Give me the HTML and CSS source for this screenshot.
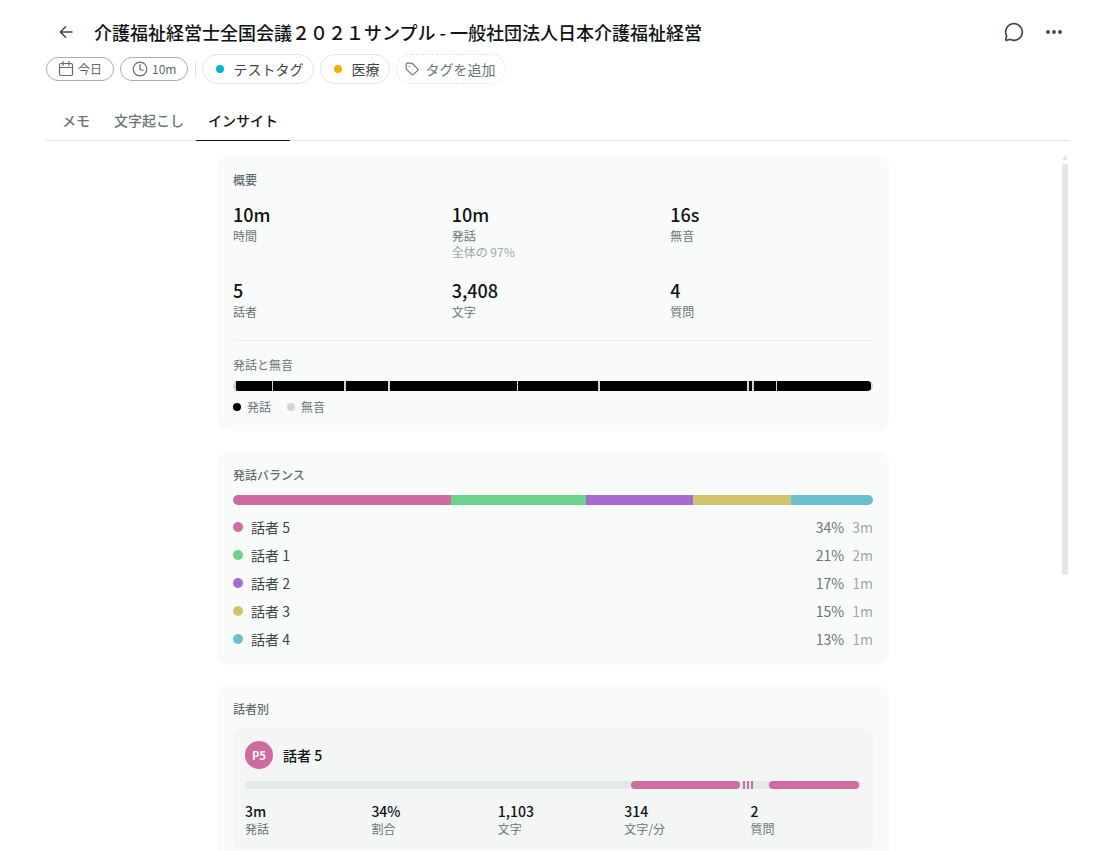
FILE: index.html
```html
<!DOCTYPE html>
<html lang="ja">
<head>
<meta charset="UTF-8">
<meta name="viewport" content="width=device-width,initial-scale=1.0">
<title>インサイト</title>
<link rel="stylesheet" href="styles.css">
</head>
<body>
	<header class="header">
		<button class="icon-btn back" aria-label="戻る">
			<svg width="18" height="18" viewBox="0 0 24 24"><path d="M20 12H4.5M11.5 5l-7 7 7 7"/></svg>
		</button>
		<h1 class="title">介護福祉経営士全国会議２０２１サンプル - 一般社団法人日本介護福祉経営</h1>
		<button class="icon-btn" aria-label="チャット">
			<svg width="20" height="20" viewBox="0 0 24 24"><path d="M2.992 16.342a2 2 0 0 1 .094 1.167l-1.065 3.29a1 1 0 0 0 1.236 1.168l3.413-.998a2 2 0 0 1 1.099.092 10 10 0 1 0-4.777-4.719"/></svg>
		</button>
		<button class="icon-btn" aria-label="メニュー">
			<svg class="fill" width="20" height="20" viewBox="0 0 20 20"><circle cx="4" cy="10" r="1.9"/><circle cx="10" cy="10" r="1.9"/><circle cx="16" cy="10" r="1.9"/></svg>
		</button>
	</header>
	<div class="tags">
		<button class="pill">
			<svg width="16" height="16" viewBox="0 0 16 16"><rect x="1.5" y="2.5" width="13" height="12" rx="1.5"/><path d="M1.5 6.5h13M5 .5v4M11 .5v4"/></svg>今日
		</button>
		<button class="pill">
			<svg width="16" height="16" viewBox="0 0 16 16"><circle cx="8" cy="8" r="6.8"/><path d="M8 3.5v5l3 1"/></svg>10m
		</button>
		<span class="divider"></span>
		<button class="tag"><i class="tag-dot cyan"></i>テストタグ</button>
		<button class="tag"><i class="tag-dot amber"></i>医療</button>
		<button class="tag add">
			<svg width="14" height="14" viewBox="0 0 24 24"><path d="M12.586 2.586A2 2 0 0 0 11.172 2H4a2 2 0 0 0-2 2v7.172a2 2 0 0 0 .586 1.414l8.704 8.704a2.426 2.426 0 0 0 3.42 0l6.58-6.58a2.426 2.426 0 0 0 0-3.42z"/><circle class="hole" cx="7.5" cy="7.5" r="1"/></svg>タグを追加
		</button>
	</div>
	<nav class="tabs">
		<a href="#" class="tab">メモ</a>
		<a href="#" class="tab">文字起こし</a>
		<a href="#" class="tab active">インサイト</a>
	</nav>
	<div class="body">
		<main class="scroll">
			<section class="card">
				<h2 class="card-title">概要</h2>
				<div class="stats">
					<div><p class="num">10m</p><p class="label">時間</p></div>
					<div><p class="num">10m</p><p class="label">発話</p><p class="label sub">全体の 97%</p></div>
					<div><p class="num">16s</p><p class="label">無音</p></div>
					<div><p class="num">5</p><p class="label">話者</p></div>
					<div><p class="num">3,408</p><p class="label">文字</p></div>
					<div><p class="num">4</p><p class="label">質問</p></div>
				</div>
				<div class="silence">
					<p class="label">発話と無音</p>
					<!-- flex-grow = 区間の長さ -->
					<div class="bar speech">
						<i class="quiet" style="flex-grow:3"></i><i style="flex-grow:36"></i>
						<i class="quiet" style="flex-grow:1"></i><i style="flex-grow:71"></i>
						<i class="quiet" style="flex-grow:2"></i><i style="flex-grow:42"></i>
						<i class="quiet" style="flex-grow:2"></i><i style="flex-grow:127"></i>
						<i class="quiet" style="flex-grow:1"></i><i style="flex-grow:80"></i>
						<i class="quiet" style="flex-grow:2"></i><i style="flex-grow:147"></i>
						<i class="quiet" style="flex-grow:2"></i><i style="flex-grow:3"></i>
						<i class="quiet" style="flex-grow:2"></i><i style="flex-grow:22"></i>
						<i class="quiet" style="flex-grow:1"></i><i class="last" style="flex-grow:94"></i>
						<i class="quiet" style="flex-grow:2"></i>
					</div>
					<div class="legend">
						<span class="label key">発話</span>
						<span class="label key off">無音</span>
					</div>
				</div>
			</section>

			<section class="card">
				<h2 class="card-title">発話バランス</h2>
				<div class="bar">
					<i class="pink" style="flex-grow:218"></i>
					<i class="green" style="flex-grow:135"></i>
					<i class="purple" style="flex-grow:107"></i>
					<i class="yellow" style="flex-grow:98"></i>
					<i class="blue" style="flex-grow:82"></i>
				</div>
				<ul class="speakers">
					<li><i class="dot pink"></i><span class="name">話者 5</span><span>34%</span><span class="time">3m</span></li>
					<li><i class="dot green"></i><span class="name">話者 1</span><span>21%</span><span class="time">2m</span></li>
					<li><i class="dot purple"></i><span class="name">話者 2</span><span>17%</span><span class="time">1m</span></li>
					<li><i class="dot yellow"></i><span class="name">話者 3</span><span>15%</span><span class="time">1m</span></li>
					<li><i class="dot blue"></i><span class="name">話者 4</span><span>13%</span><span class="time">1m</span></li>
				</ul>
			</section>

			<section class="card">
				<h2 class="card-title">話者別</h2>
				<div class="person">
					<div class="person-head">
						<span class="avatar pink">P5</span>
						<h3 class="person-name">話者 5</h3>
					</div>
					<div class="bar timeline">
						<i style="flex-grow:386"></i><i class="pink long" style="flex-grow:109"></i>
						<i style="flex-grow:3"></i><i class="pink" style="flex-grow:2"></i>
						<i style="flex-grow:2"></i><i class="pink" style="flex-grow:2"></i>
						<i style="flex-grow:2"></i><i class="pink" style="flex-grow:2"></i>
						<i style="flex-grow:16"></i><i class="pink long" style="flex-grow:90"></i>
						<i style="flex-grow:2"></i>
					</div>
					<div class="person-stats">
						<div><p class="val">3m</p><p class="label">発話</p></div>
						<div><p class="val">34%</p><p class="label">割合</p></div>
						<div><p class="val">1,103</p><p class="label">文字</p></div>
						<div><p class="val">314</p><p class="label">文字/分</p></div>
						<div><p class="val">2</p><p class="label">質問</p></div>
					</div>
				</div>
			</section>
		</main>
		<div class="rail">
			<i class="rail-up"></i>
			<i class="rail-thumb"></i>
		</div>
	</div>
</body>
</html>
```
FILE: styles.css
```css
*{margin:0;padding:0;box-sizing:border-box;}
html,body{height:100%;}
body{
	display: flex;
	flex-direction: column;
	padding: 12px 50px 0 46px;
	font-family: "Noto Sans CJK JP", sans-serif;
	font-size: 14px;
	line-height: 20px;
	color: #3c4649;
	background: #fff;
	overflow: hidden;
}
button{font: inherit;color: inherit;background: none;border: none;cursor: pointer;}
a{color: inherit;text-decoration: none;}
ul{list-style: none;}
i{display: block;}
svg{flex: none;fill: none;stroke: currentColor;stroke-width: 2;stroke-linecap: round;stroke-linejoin: round;}

.header{display: flex;align-items: center;gap: 8px;height: 40px;}
.icon-btn{display: flex;align-items: center;justify-content: center;width: 32px;height: 32px;}
.icon-btn.back{width: 40px;}
.icon-btn .fill{fill: currentColor;stroke: none;}
.title{flex: 1;min-width: 0;overflow: hidden;white-space: nowrap;text-overflow: ellipsis;font-size: 18px;line-height: 28px;font-weight: 500;color: #101415;}

.tags{display: flex;align-items: center;gap: 6px;margin-top: 2px;}
.pill{
	display: flex;
	align-items: center;
	gap: 4px;
	height: 24px;
	padding: 0 11px;
	border: 1px solid #a9adae;
	border-radius: 12px;
	font-size: 12px;
	color: #626b6d;
}
.pill svg{stroke-width: 1.2;}
.divider{width: 1px;height: 16px;margin-left: 1px;background: #e0e3e4;}
.tag{
	display: flex;
	align-items: center;
	gap: 6px;
	height: 30px;
	padding: 0 10px;
	border: 1px solid #e1e5e6;
	border-radius: 15px;
}
.tag-dot{width: 8px;height: 8px;margin: 0 3px;border-radius: 50%;}
.cyan{background: #06b6d4;}
.amber{background: #eab308;}
.tag.add{padding-left: 8px;border-style: dashed;color: #6b7679;}
.hole{fill: currentColor;stroke: none;}

.tabs{display: flex;margin-top: 17px;padding-left: 4px;border-bottom: 1px solid #e1e4e5;}
.tab{height: 40px;margin-bottom: -1px;padding: 9px 12px;color: #6b7679;font-weight: 500;}
.tab.active{border-bottom: 1px solid #101415;color: #101415;}

.body{display: flex;flex: 1;min-height: 0;}
.scroll{flex: 1;min-width: 0;padding-top: 15px;overflow-y: auto;scrollbar-width: none;}
.rail{display: flex;flex-direction: column;align-items: center;gap: 4px;width: 10px;padding-top: 14px;}
.rail-up{border: 3px solid transparent;border-top: none;border-bottom: 5px solid #e2e6e8;}
.rail-thumb{width: 6px;height: 59%;border-radius: 3px;background: #e2e6e8;}

.card{max-width: 672px;margin: 0 auto 20px;padding: 16px;border-radius: 12px;background: #f9fbfa;}
.card-title{margin-bottom: 12px;font-size: 12px;line-height: 16px;font-weight: 500;color: #636e71;}
.label{font-size: 12px;line-height: 16px;color: #6b7679;}
.label.sub{color: #9fa7a9;}

.stats{display: grid;grid-template-columns: repeat(3,1fr);gap: 16px;}
.num{font-size: 18px;line-height: 28px;font-weight: 500;color: #101415;}
.silence{margin-top: 20px;padding-top: 16px;border-top: 1px solid #eceeee;}

.bar{display: flex;height: 10px;border-radius: 5px;overflow: hidden;}
.bar i{flex: 0 1 0;}
.speech{margin: 8px 0;background: #d3d5d5;}
.speech i{background: #000;}
.speech .quiet{background: #d3d5d5;}
.speech .last{border-radius: 0 3px 3px 0;}
.legend{display: flex;gap: 16px;}
.key{display: flex;align-items: center;gap: 6px;}
.key:before{content: '';width: 8px;height: 8px;border-radius: 50%;background: #000;}
.key.off:before{background: #d3d5d5;}

.pink{background: #d06ba2;}
.green{background: #6dd28a;}
.purple{background: #a56bd1;}
.yellow{background: #d0c36b;}
.blue{background: #6bbfd0;}

.speakers{display: grid;gap: 8px;margin-top: 12px;}
.speakers li{display: flex;align-items: center;gap: 8px;color: #6b7679;}
.dot{width: 10px;height: 10px;border-radius: 50%;}
.name{flex: 1;color: #3c4649;}
.time{color: #9fa7a9;}

.person{padding: 12px;border-radius: 8px;background: #f4f6f6;}
.person-head{display: flex;align-items: center;gap: 10px;}
.avatar{width: 28px;height: 28px;border-radius: 50%;font-size: 11px;line-height: 28px;font-weight: 700;text-align: center;color: #fff;}
.person-name{font-size: 14px;font-weight: 500;color: #101415;}
.timeline{height: 8px;margin: 12px 0;border-radius: 4px;background: #e5e8e8;}
.timeline .long{border-radius: 4px;}
.person-stats{display: grid;grid-template-columns: repeat(5,1fr);gap: 16px;}
.val{font-weight: 500;color: #101415;}
```
